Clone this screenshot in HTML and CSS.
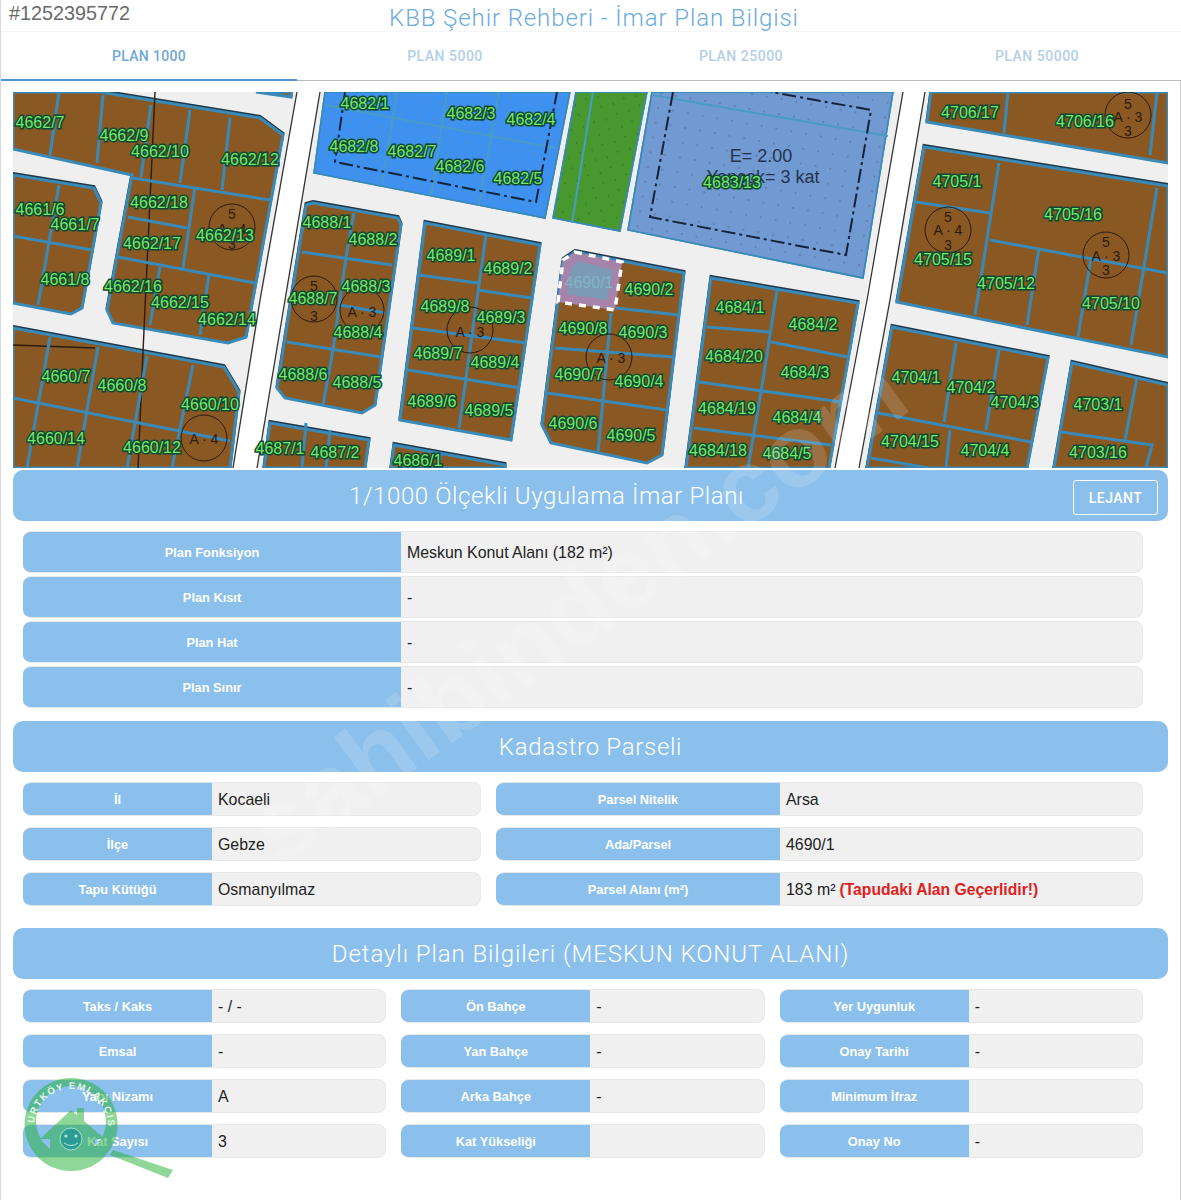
FILE: index.html
```html
<!DOCTYPE html>
<html lang="tr">
<head>
    <meta charset="UTF-8">
    <title>KBB Şehir Rehberi - İmar Plan Bilgisi</title>
    <link rel="stylesheet" href="styles.css">
</head>
<body>
    <div class="listing-no">#1252395772</div>
    <h1 class="page-title">KBB Şehir Rehberi - İmar Plan Bilgisi</h1>

    <div class="tabs">
        <div class="tab active">PLAN 1000</div>
        <div class="tab">PLAN 5000</div>
        <div class="tab">PLAN 25000</div>
        <div class="tab">PLAN 50000</div>
    </div>

    <div class="card">
        <!-- Map, drawn in page coordinates -->
        <svg class="map" viewBox="13 92 1155 376" xmlns="http://www.w3.org/2000/svg">
            <defs>
                <pattern id="dots-blue" width="17" height="17" patternUnits="userSpaceOnUse" patternTransform="rotate(10)">
                    <circle cx="8" cy="8" r="1" fill="#5f8fc9"/>
                </pattern>
                <pattern id="dots-grey" width="15" height="15" patternUnits="userSpaceOnUse" patternTransform="rotate(10)">
                    <circle cx="7" cy="7" r="1.1" fill="#5d7da8"/>
                </pattern>
                <pattern id="dots-green" width="17" height="17" patternUnits="userSpaceOnUse" patternTransform="rotate(25)">
                    <path d="M4 4l2 2M11 12l2 1" stroke="#2f7322" stroke-width="1"/>
                </pattern>
                <g id="blocks">
                    <polygon points="13,92 100,92 260,118 283,135 246,337 228,343 113,323 107,310 132,175 13,149"/>
                    <polygon points="256,92 291,92 291,97"/>
                    <polygon points="13,175 94,188 101,203 82,308 71,314 13,303"/>
                    <polygon points="13,328 224,367 239,392 230,468 13,468"/>
                    <polygon points="306,205 313,203 398,218 401,225 375,405 362,413 285,398 277,388"/>
                    <polygon points="425,223 540,245 511,440 400,420"/>
                    <polygon points="575,252 684,273 662,455 647,463 551,443 542,425 563,260"/>
                    <polygon points="711,278 858,303 829,468 686,468"/>
                    <polygon points="270,423 369,440 365,468 264,468"/>
                    <polygon points="394,445 505,465 505,468 391,468"/>
                    <polygon points="931,92 1168,92 1168,163 927,122"/>
                    <polygon points="924,147 1168,186 1168,357 897,302"/>
                    <polygon points="892,327 1048,358 1027,468 867,468"/>
                    <polygon points="1072,363 1168,385 1168,468 1054,468"/>
                </g>
            </defs>

            <rect x="13" y="92" width="1155" height="376" fill="#efefef"/>
            <polygon points="297,92 320,92 257,468 233,468" fill="#fff"/>
            <polygon points="903,92 925,92 859,468 835,468" fill="#fff"/>

            <!-- Land use blocks -->
            <use href="#blocks" class="block-edge"/>
            <use href="#blocks" class="block"/>
            <polygon class="area" points="325,92 570,92 545,218 314,173" fill="#3f91f0"/>
            <polygon class="area" points="325,92 570,92 545,218 314,173" fill="url(#dots-blue)"/>
            <polygon class="area" points="576,92 647,92 620,231 553,218" fill="#47992f"/>
            <polygon class="area" points="576,92 647,92 620,231 553,218" fill="url(#dots-green)"/>
            <polygon class="area" points="652,92 893,92 863,278 628,230" fill="#7199d2"/>
            <polygon class="area" points="652,92 893,92 863,278 628,230" fill="url(#dots-grey)"/>

            <!-- Dark lines: road edges, boundary -->
            <path class="road-line" d="M297 92L260 300L233 468M320 92L285 300L257 468M903 92L867 300L835 468M925 92L890 300L859 468"/>
            <path class="boundary" d="M155 92L143 352L138 468M13 345L95 348"/>

            <!-- Parcel lines -->
            <path class="parcel" d="M59 92L50 155M103 95L97 163M151 105L141 177M190 110L180 183M230 118L222 190M132 178L270 200M195 187L183 268M128 217L187 228M118 257L255 283M160 267L150 325M209 274L200 335"/>
            <path class="parcel" d="M59 185L38 305M13 236L92 250"/>
            <path class="parcel" d="M50 337L27 468M98 347L77 468M147 356L127 468M193 365L172 468M13 398L230 441"/>
            <path class="parcel" d="M354 213L346 257L333 350L323 405M302 252L392 265M287 342L381 357M340 305L385 313"/>
            <path class="parcel" d="M486 235L459 428M419 275L478 283M478 290L532 298M413 328L526 343M408 370L520 388"/>
            <path class="parcel" d="M611 313L598 453M616 308L679 315M555 348L673 357M547 393L667 410"/>
            <path class="parcel" d="M777 290L763 380L748 468M707 327L769 332M771 342L848 357M699 382L841 402M694 428L831 445"/>
            <path class="parcel" d="M306 423L302 468M330 430L326 468M441 452L438 468"/>
            <path class="parcel" d="M1008 92L1004 133M1157 92L1150 155"/>
            <path class="parcel" d="M999 163L975 315M1157 188L1131 345M916 202L990 213M990 240L1168 273M1039 248L1027 325M1091 258L1078 337"/>
            <path class="parcel" d="M956 343L944 422M999 350L986 430M950 430L946 468M878 413L1031 442M871 458L929 468"/>
            <path class="parcel" d="M1137 378L1125 440M1061 432L1152 445L1146 468"/>
            <path class="parcel-thin" d="M397 92L382 183M447 92L431 195M499 92L479 205M325 105L555 148"/>
            <path class="parcel-thin" d="M593 92L572 223"/>
            <path class="parcel-thin" d="M652 95L888 136"/>

            <!-- Building limits -->
            <path class="limit" d="M345 92L335 162L536 202L557 92"/>
            <path class="limit" d="M673 92L650 217L846 255L871 110L771 92"/>

            <!-- Highlighted parcel -->
            <polygon points="575,252 622,262 615,310 558,302 563,260" fill="#a583aa"/>
            <polygon points="577,261 613,270 607,300 567,294 571,268" fill="#7c9ab5"/>
            <polygon class="selected" points="575,252 622,262 615,310 558,302 563,260"/>

            <!-- Zoning stamps -->
            <g class="stamp">
                <circle cx="232" cy="227" r="23"/><text x="232" y="219">5</text><text x="232" y="234">A · 4</text><text x="232" y="249">3</text>
                <circle cx="314" cy="299" r="23"/><text x="314" y="291">5</text><text x="314" y="321">3</text>
                <circle cx="362" cy="310" r="22"/><text x="362" y="317">A · 3</text>
                <circle cx="470" cy="330" r="23"/><text x="470" y="337">A · 3</text>
                <circle cx="609" cy="357" r="23"/><text x="611" y="363">A · 3</text>
                <circle cx="204" cy="438" r="23"/><text x="204" y="444">A · 4</text>
                <circle cx="948" cy="230" r="23"/><text x="948" y="222">5</text><text x="948" y="235">A · 4</text><text x="948" y="250">3</text>
                <circle cx="1106" cy="255" r="23"/><text x="1106" y="247">5</text><text x="1106" y="261">A · 3</text><text x="1106" y="275">3</text>
                <circle cx="1128" cy="115" r="23"/><text x="1128" y="109">5</text><text x="1128" y="122">A · 3</text><text x="1128" y="136">3</text>
            </g>

            <text class="note" x="761" y="162">E= 2.00</text>
            <text class="note" x="763" y="183">Yençok= 3 kat</text>

            <!-- Parcel numbers -->
            <g class="lot">
                <text x="40" y="128">4662/7</text>
                <text x="124" y="141">4662/9</text>
                <text x="160" y="157">4662/10</text>
                <text x="250" y="165">4662/12</text>
                <text x="159" y="208">4662/18</text>
                <text x="152" y="249">4662/17</text>
                <text x="225" y="241">4662/13</text>
                <text x="133" y="292">4662/16</text>
                <text x="180" y="308">4662/15</text>
                <text x="227" y="325">4662/14</text>
                <text x="40" y="215">4661/6</text>
                <text x="75" y="230">4661/7</text>
                <text x="65" y="285">4661/8</text>
                <text x="66" y="382">4660/7</text>
                <text x="122" y="391">4660/8</text>
                <text x="210" y="410">4660/10</text>
                <text x="56" y="444">4660/14</text>
                <text x="152" y="453">4660/12</text>
                <text x="280" y="454">4687/1</text>
                <text x="335" y="458">4687/2</text>
                <text x="418" y="466">4686/1</text>
                <text x="365" y="109">4682/1</text>
                <text x="471" y="119">4682/3</text>
                <text x="531" y="125">4682/4</text>
                <text x="354" y="152">4682/8</text>
                <text x="412" y="157">4682/7</text>
                <text x="460" y="172">4682/6</text>
                <text x="518" y="184">4682/5</text>
                <text x="732" y="188">4683/13</text>
                <text x="327" y="228">4688/1</text>
                <text x="373" y="245">4688/2</text>
                <text x="366" y="292">4688/3</text>
                <text x="313" y="304">4688/7</text>
                <text x="358" y="338">4688/4</text>
                <text x="303" y="380">4688/6</text>
                <text x="357" y="388">4688/5</text>
                <text x="451" y="261">4689/1</text>
                <text x="508" y="274">4689/2</text>
                <text x="445" y="312">4689/8</text>
                <text x="501" y="323">4689/3</text>
                <text x="438" y="359">4689/7</text>
                <text x="495" y="368">4689/4</text>
                <text x="432" y="407">4689/6</text>
                <text x="489" y="416">4689/5</text>
                <text x="649" y="295">4690/2</text>
                <text x="583" y="334">4690/8</text>
                <text x="643" y="338">4690/3</text>
                <text x="579" y="380">4690/7</text>
                <text x="639" y="387">4690/4</text>
                <text x="573" y="429">4690/6</text>
                <text x="631" y="441">4690/5</text>
                <text x="740" y="313">4684/1</text>
                <text x="813" y="330">4684/2</text>
                <text x="734" y="362">4684/20</text>
                <text x="805" y="378">4684/3</text>
                <text x="727" y="414">4684/19</text>
                <text x="797" y="423">4684/4</text>
                <text x="718" y="456">4684/18</text>
                <text x="787" y="459">4684/5</text>
                <text x="970" y="118">4706/17</text>
                <text x="1085" y="127">4706/16</text>
                <text x="957" y="187">4705/1</text>
                <text x="1073" y="220">4705/16</text>
                <text x="943" y="265">4705/15</text>
                <text x="1006" y="289">4705/12</text>
                <text x="1111" y="309">4705/10</text>
                <text x="916" y="383">4704/1</text>
                <text x="971" y="393">4704/2</text>
                <text x="1015" y="408">4704/3</text>
                <text x="1098" y="410">4703/1</text>
                <text x="910" y="447">4704/15</text>
                <text x="985" y="456">4704/4</text>
                <text x="1098" y="458">4703/16</text>
            </g>
            <text class="lot-faded" x="589" y="288">4690/1</text>
        </svg>

        <div class="section-head with-button">
            <span class="section-title">1/1000 Ölçekli Uygulama İmar Planı</span>
            <button class="legend-button">LEJANT</button>
        </div>
        <div class="rows rows-plan">
            <div class="field"><div class="field-label">Plan Fonksiyon</div><div class="field-value">Meskun Konut Alanı (182 m²)</div></div>
            <div class="field"><div class="field-label">Plan Kısıt</div><div class="field-value">-</div></div>
            <div class="field"><div class="field-label">Plan Hat</div><div class="field-value">-</div></div>
            <div class="field"><div class="field-label">Plan Sınır</div><div class="field-value">-</div></div>
        </div>

        <div class="section-head head-cadastre"><span class="section-title">Kadastro Parseli</span></div>
        <div class="rows rows-cadastre">
            <div class="field"><div class="field-label">İl</div><div class="field-value">Kocaeli</div></div>
            <div class="field wide"><div class="field-label">Parsel Nitelik</div><div class="field-value">Arsa</div></div>
            <div class="field"><div class="field-label">İlçe</div><div class="field-value">Gebze</div></div>
            <div class="field wide"><div class="field-label">Ada/Parsel</div><div class="field-value">4690/1</div></div>
            <div class="field"><div class="field-label">Tapu Kütüğü</div><div class="field-value">Osmanyılmaz</div></div>
            <div class="field wide"><div class="field-label">Parsel Alanı (m²)</div><div class="field-value">183 m² <b class="warning">(Tapudaki Alan Geçerlidir!)</b></div></div>
        </div>

        <div class="section-head head-detail"><span class="section-title">Detaylı Plan Bilgileri (MESKUN KONUT ALANI)</span></div>
        <div class="rows rows-detail">
            <div class="field"><div class="field-label">Taks / Kaks</div><div class="field-value">- / -</div></div>
            <div class="field"><div class="field-label">Ön Bahçe</div><div class="field-value">-</div></div>
            <div class="field"><div class="field-label">Yer Uygunluk</div><div class="field-value">-</div></div>
            <div class="field"><div class="field-label">Emsal</div><div class="field-value">-</div></div>
            <div class="field"><div class="field-label">Yan Bahçe</div><div class="field-value">-</div></div>
            <div class="field"><div class="field-label">Onay Tarihi</div><div class="field-value">-</div></div>
            <div class="field"><div class="field-label">Yapı Nizamı</div><div class="field-value">A</div></div>
            <div class="field"><div class="field-label">Arka Bahçe</div><div class="field-value">-</div></div>
            <div class="field"><div class="field-label">Minimum İfraz</div><div class="field-value"></div></div>
            <div class="field"><div class="field-label">Kat Sayısı</div><div class="field-value">3</div></div>
            <div class="field"><div class="field-label">Kat Yükseliği</div><div class="field-value"></div></div>
            <div class="field"><div class="field-label">Onay No</div><div class="field-value">-</div></div>
        </div>
    </div>

    <!-- Watermarks over the photo -->
    <div class="watermark">sahibinden.com</div>

    <svg class="agency-logo" viewBox="0 1060 190 130" xmlns="http://www.w3.org/2000/svg">
        <defs>
            <path id="logo-arc" d="M34 1126A37 37 0 0 1 108 1126"/>
        </defs>
        <g class="logo-shape">
            <path fill-rule="evenodd" d="M71 1078a46.500 46.500 0 1 0 0 93a46.500 46.500 0 1 0 0-93zM71 1086a35 35 0 1 1 0 70a35 35 0 1 1 0-70z"/>
            <polygon points="113,1150 173,1170 168,1178 110,1155"/>
            <path d="M71 1110L77 1115V1108H84V1121L105 1139H95V1156H50V1139H40Z"/>
        </g>
        <circle cx="71" cy="1139" r="11" fill="#2c9d94" stroke="#a7e0c8" stroke-width="1"/>
        <circle cx="66" cy="1136" r="1.6" fill="#b9e8d8"/>
        <circle cx="76" cy="1136" r="1.6" fill="#b9e8d8"/>
        <path d="M64 1143q7 5 14 0" fill="none" stroke="#b9e8d8" stroke-width="1"/>
        <text class="logo-text"><textPath href="#logo-arc" startOffset="50%">KURTKÖY EMLAKÇISI</textPath></text>
    </svg>
</body>
</html>
```
FILE: styles.css
```css
* {
    box-sizing: border-box;
}
html, body {
    height: 1200px;
    overflow: hidden;
}
body {
    margin: 0;
    position: relative;
    background: #fff;
    color: #222;
    border-left: 1px solid #d5dbe0;
    font-family: 'Liberation Sans', Arial, sans-serif;
}

.listing-no {
    position: absolute;
    top: 2px;
    left: 8px;
    font-size: 19.800px;
    color: #6a6a6a;
}
.page-title {
    margin: 0;
    height: 32px;
    line-height: 36px;
    padding-left: 6px;
    text-align: center;
    font-family: Roboto, sans-serif;
    font-size: 24px;
    font-weight: 300;
    letter-spacing: 0.900px;
    color: #6cabe0;
    border-bottom: 1px solid #f6f6f6;
}

/* Tabs */
.tabs {
    display: flex;
    height: 49px;
}
.tab {
    flex: none;
    width: 296px;
    line-height: 48px;
    text-align: center;
    font-family: Roboto, sans-serif;
    font-size: 14px;
    font-weight: 500;
    letter-spacing: 0.500px;
    color: #b3cfe8;
    border-bottom: 1px solid #bbb;
}
.tab.active {
    letter-spacing: 0.300px;
    color: #6fa8d8;
    border-bottom: 2px solid #4f94d4;
}

.card {
    height: 1119px;
    padding: 11px 12px 0;
    border-right: 1px solid #ccc;
}
.map {
    display: block;
    width: 1155px;
    height: 376px;
}

/* Map drawing */
.block {
    fill: #8a5823;
    stroke: #3a8ab8;
    stroke-width: 3;
}
.block-edge {
    fill: none;
    stroke: #20384a;
    stroke-width: 3;
    transform: translateY(-1.500px);
}
.area {
    stroke: #3a8ab8;
    stroke-width: 1.500;
}
.road-line {
    fill: none;
    stroke: #333;
    stroke-width: 1.300;
}
.boundary {
    fill: none;
    stroke: #2a1c10;
    stroke-width: 1.400;
}
.parcel {
    fill: none;
    stroke: #3a8ab8;
    stroke-width: 3;
}
.parcel-thin {
    fill: none;
    stroke: #4a9cc4;
    stroke-width: 2;
}
.limit {
    fill: none;
    stroke: #14233a;
    stroke-width: 2;
    stroke-dasharray: 14 4 3 4;
}
.selected {
    fill: none;
    stroke: #fff;
    stroke-width: 3.500;
    stroke-dasharray: 7 7;
}
.stamp circle {
    fill: none;
    stroke: #2c1a0c;
    stroke-width: 1;
}
.stamp text {
    fill: #2c1a0c;
    font-size: 14px;
    text-anchor: middle;
}
.note {
    fill: #24344e;
    font-size: 18px;
    text-anchor: middle;
}
.lot text {
    fill: #78e86a;
    stroke: #0d4a30;
    stroke-width: 3px;
    paint-order: stroke;
    font-size: 16px;
    text-anchor: middle;
}
.lot-faded {
    fill: #82b4c6;
    font-size: 16px;
    text-anchor: middle;
}

/* Section headers */
.section-head {
    display: flex;
    align-items: center;
    justify-content: center;
    height: 51px;
    border-radius: 10px;
    background: #8bbfec;
}
.with-button {
    margin-top: 2px;
    justify-content: space-between;
    padding: 0 10px 0 336px;
}
.with-button .section-title {
    letter-spacing: 0.600px;
}
.head-cadastre {
    margin-top: 13px;
}
.head-detail {
    margin-top: 22px;
}
.head-detail .section-title {
    letter-spacing: 0.920px;
}
.section-title {
    font-family: Roboto, sans-serif;
    font-size: 24px;
    font-weight: 300;
    letter-spacing: 0.700px;
    color: #fff;
}
.legend-button {
    width: 85px;
    height: 35px;
    margin-top: 4px;
    padding: 0;
    background: transparent;
    border: 1.500px solid #fff;
    border-radius: 3px;
    color: #fff;
    font-family: Roboto, sans-serif;
    font-size: 14px;
    font-weight: 500;
    letter-spacing: 0.500px;
}

/* Label + value rows */
.rows {
    display: grid;
    padding: 10px 25px 0 10px;
}
.rows-plan {
    row-gap: 3px;
    grid-auto-rows: 42px;
}
.rows-cadastre {
    grid-template-columns: 458px 647px;
    gap: 11px 15px;
    grid-auto-rows: 34px;
}
.rows-detail {
    grid-template-columns: repeat(3, 1fr);
    gap: 11px 15px;
    grid-auto-rows: 34px;
}
.field {
    display: flex;
    overflow: hidden;
    background: #f0f0f0;
    border: 1px solid #e8e8e8;
    border-left: 0;
    border-radius: 8px;
}
.field-label {
    flex: none;
    display: flex;
    align-items: center;
    justify-content: center;
    width: 189px;
    background: #8bbfec;
    color: #fff;
    font-size: 12.800px;
    font-weight: bold;
}
.rows-plan .field-label {
    width: 378px;
}
.wide .field-label {
    width: 284px;
}
.field-value {
    display: flex;
    align-items: center;
    gap: 4px;
    padding: 2px 0 0 6px;
    font-size: 15.900px;
    color: #222;
    white-space: nowrap;
}
.warning {
    font-size: 15.700px;
    color: #e0201c;
}

/* Overlays */
.watermark {
    position: absolute;
    top: 551px;
    left: 125px;
    width: 900px;
    text-align: center;
    font-size: 103px;
    font-weight: bold;
    color: rgba(255, 255, 255, 0.15);
    transform: rotate(-36deg);
    white-space: nowrap;
    pointer-events: none;
}
.agency-logo {
    position: absolute;
    top: 1060px;
    left: -1px;
    width: 190px;
    height: 130px;
    pointer-events: none;
}
.logo-shape {
    fill: #28b33d;
    opacity: 0.52;
}
.logo-text {
    fill: #e6f8ea;
    font-size: 9.500px;
    font-weight: bold;
    letter-spacing: 1.500px;
    text-anchor: middle;
}
```
